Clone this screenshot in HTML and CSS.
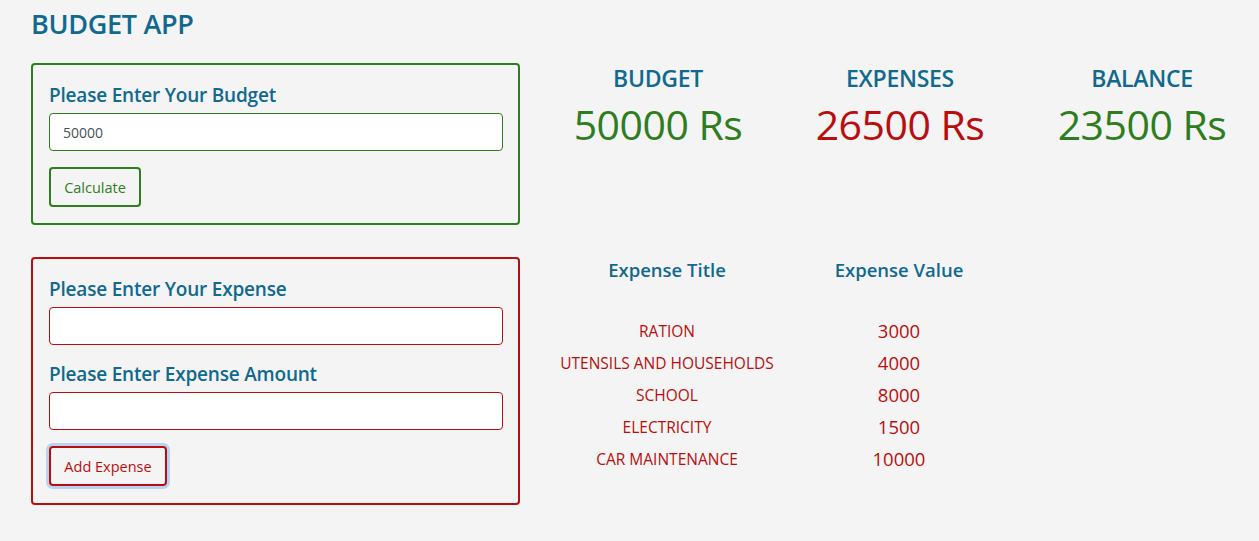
FILE: index.html
```html
<!DOCTYPE html>
<html>
<head>
<meta charset="utf-8">
<link rel="stylesheet" href="styles.css">
</head>
<body>
<div class="app">
  <h1 class="app-title">BUDGET APP</h1>
  <div class="layout">
    <div class="left">
      <div class="card card-green">
        <label class="field-label">Please Enter Your Budget</label>
        <input class="input input-green" type="text" value="50000">
        <button class="btn btn-green">Calculate</button>
      </div>
      <div class="card card-red">
        <label class="field-label">Please Enter Your Expense</label>
        <input class="input input-red" type="text">
        <label class="field-label">Please Enter Expense Amount</label>
        <input class="input input-red" type="text">
        <button class="btn btn-red btn-focus">Add Expense</button>
      </div>
    </div>
    <div class="right">
      <div class="stats">
        <div class="stat">
          <div class="stat-head">BUDGET</div>
          <div class="stat-val green">50000 Rs</div>
        </div>
        <div class="stat">
          <div class="stat-head">EXPENSES</div>
          <div class="stat-val red">26500 Rs</div>
        </div>
        <div class="stat">
          <div class="stat-head">BALANCE</div>
          <div class="stat-val green">23500 Rs</div>
        </div>
      </div>
      <div class="table">
        <div class="th">Expense Title</div>
        <div class="th">Expense Value</div>
        <div class="spacer"></div>
        <div class="td-title">RATION</div><div class="td-val">3000</div>
        <div class="td-title">UTENSILS AND HOUSEHOLDS</div><div class="td-val">4000</div>
        <div class="td-title">SCHOOL</div><div class="td-val">8000</div>
        <div class="td-title">ELECTRICITY</div><div class="td-val">1500</div>
        <div class="td-title">CAR MAINTENANCE</div><div class="td-val">10000</div>
      </div>
    </div>
  </div>
</div>
</body>
</html>
```

FILE: styles.css
```css
* { box-sizing: border-box; }
html, body {
  margin: 0;
  padding: 0;
  background: #f4f4f4;
  font-family: "Open Sans", "Noto Sans", sans-serif;
}
.app {
  padding: 5px 0 0 31px;
}
.app-title {
  margin: 0;
  font-size: 27px;
  font-weight: 600;
  color: #11698e;
  line-height: 38px;
  letter-spacing: -0.3px;
}
.layout {
  display: flex;
  margin-top: 20px;
}
.left {
  width: 489px;
  display: flex;
  flex-direction: column;
  gap: 32px;
}
.card {
  border: 2px solid;
  border-radius: 4px;
  padding: 16px 16px 15px;
  display: flex;
  flex-direction: column;
  align-items: flex-start;
}
.card-green { border-color: #2e7d1e; height: 162px; }
.card-red { border-color: #b80e0e; height: 248px; }
.field-label {
  font-size: 19px;
  font-weight: 600;
  color: #11698e;
  line-height: 28px;
  letter-spacing: -0.2px;
  margin-bottom: 4px;
}
.input {
  width: 454px;
  height: 38px;
  border: 1px solid;
  border-radius: 4px;
  background: #fff;
  font-family: inherit;
  font-size: 14px;
  color: #495057;
  padding: 0 13px;
  margin-bottom: 16px;
}
.input-green { border-color: #2e7d1e; }
.input-red { border-color: #b80e0e; margin-bottom: 15px; }
.card-red .input-red + .btn { margin-top: 1px; }
.btn {
  height: 40px;
  background: transparent;
  border: 2px solid;
  border-radius: 4px;
  font-family: inherit;
  font-size: 14.5px;
  padding: 0 10px;
}
.btn-green { border-color: #2e7d1e; color: #2e7d1e; width: 92px; }
.btn-red { border-color: #b80e0e; color: #b80e0e; width: 118px; }
.btn-focus { box-shadow: 0 0 0 3px #b8d3f5; }
.right {
  margin-left: 17px;
  width: 726px;
}
.stats {
  display: grid;
  grid-template-columns: repeat(3, 242px);
}
.stat {
  text-align: center;
}
.stat-head {
  font-size: 23px;
  font-weight: 600;
  color: #11698e;
  line-height: 32px;
  margin-top: -1px;
  letter-spacing: -0.3px;
}
.stat-val {
  font-size: 41px;
  font-weight: 400;
  line-height: 58px;
  letter-spacing: -0.5px;
  margin-top: 1px;
}
.green { color: #2e7d1e; }
.red { color: #b80e0e; }
.table {
  margin-top: 104px;
  display: grid;
  grid-template-columns: 260px 204px;
}
.th {
  text-align: center;
  font-size: 18.5px;
  font-weight: 600;
  color: #11698e;
  line-height: 26px;
}
.spacer { grid-column: 1 / 3; height: 32px; }
.td-title {
  text-align: center;
  font-size: 15.5px;
  color: #b80e0e;
  line-height: 32px;
  font-weight: 400;
}
.td-val {
  text-align: center;
  font-size: 18.5px;
  color: #b80e0e;
  line-height: 32px;
  font-weight: 400;
}
```
